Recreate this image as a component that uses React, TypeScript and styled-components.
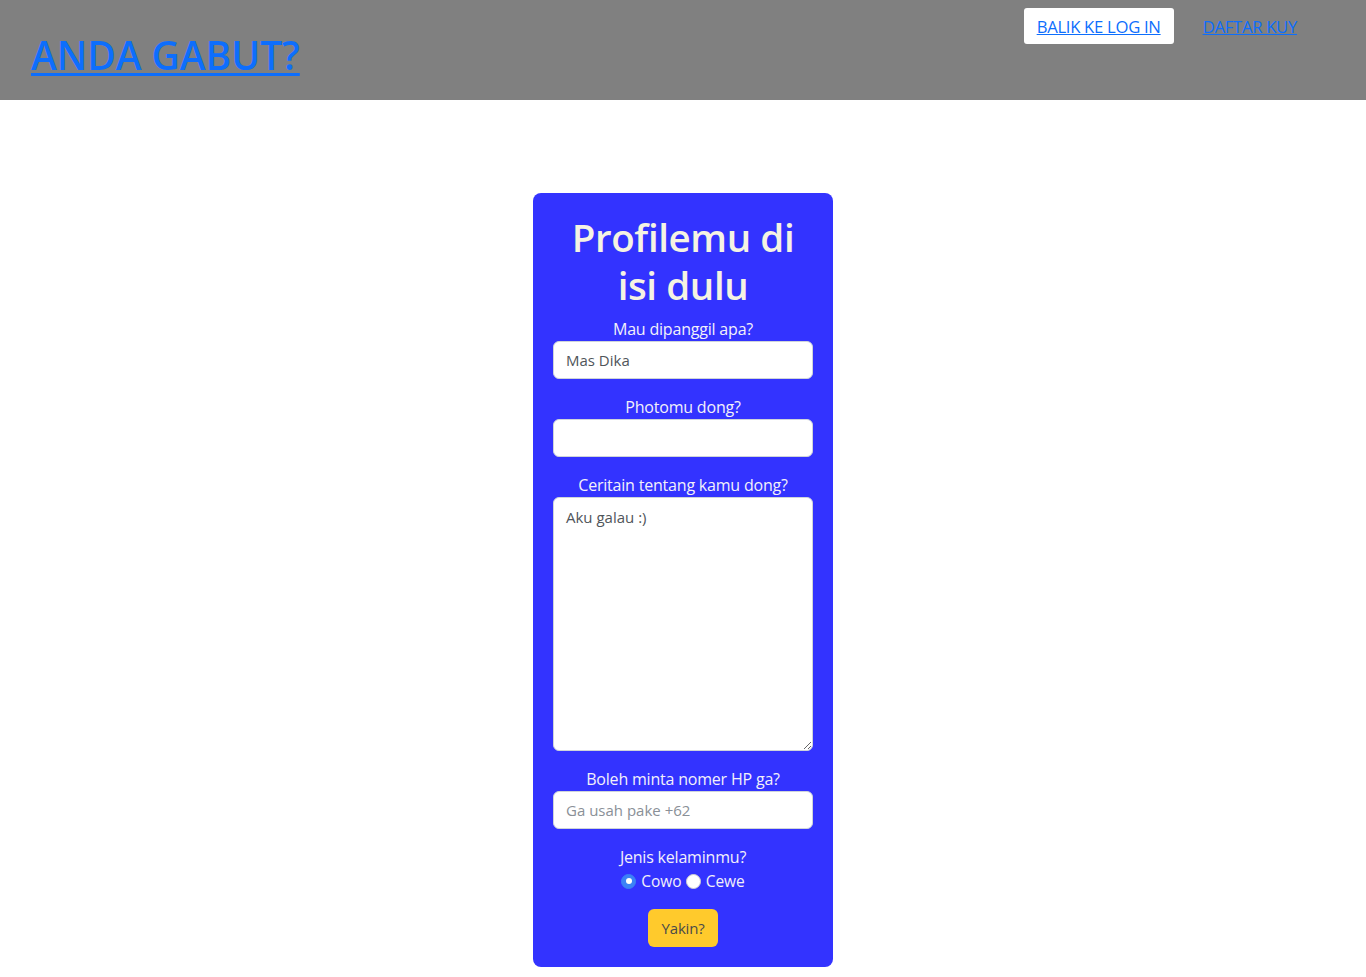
import React from "react";
import styled, { createGlobalStyle } from "styled-components";

const Global = createGlobalStyle`
  html, body { margin: 0; padding: 0; background: #fff; }
  body { font-family: "Open Sans", "Noto Sans", sans-serif; color: #212529; }
  * { box-sizing: border-box; }
`;

const Header = styled.header`
  height: 100px;
  background: #808080;
  display: flex;
  justify-content: space-between;
  align-items: flex-start;
  padding: 0 56px 0 31px;
`;

const Brand = styled.a`
  margin-top: 31px;
  font-size: 39px;
  font-weight: 600;
  line-height: 48px;
  color: #0d6efd;
  text-decoration: underline;
  text-underline-offset: 3px;
  letter-spacing: -0.05px;
`;

const Nav = styled.nav`
  display: flex;
  gap: 16px;
  margin-top: 8px;
`;

const NavLink = styled.a<{ $boxed?: boolean }>`
  display: block;
  height: 36px;
  line-height: 38px;
  padding: 0 13px;
  font-size: 16.7px;
  color: #0d6efd;
  text-decoration: underline;
  background: ${(p) => (p.$boxed ? "#fff" : "transparent")};
  border-radius: 3px;
  letter-spacing: -0.3px;
`;

const Main = styled.main`
  display: flex;
  justify-content: center;
  padding-top: 93px;
`;

const Card = styled.form`
  width: 300px;
  background: #3333ff;
  border-radius: 8px;
  padding: 20px;
  display: flex;
  flex-direction: column;
  align-items: stretch;
  text-align: center;
`;

const Title = styled.h1`
  margin: 0 0 8px;
  font-size: 38.5px;
  line-height: 48px;
  font-weight: 600;
  color: #f5f3e3;
  letter-spacing: -0.4px;
`;

const Group = styled.div`
  display: flex;
  flex-direction: column;
  margin-bottom: 16px;
`;

const Label = styled.label`
  font-size: 16px;
  line-height: 24px;
  font-weight: 500;
  color: #f2f0fa;
  letter-spacing: -0.2px;
`;

const Input = styled.input`
  height: 38px;
  width: 100%;
  border: 1px solid #ced4da;
  border-radius: 6px;
  padding: 6px 12px;
  font-family: inherit;
  font-size: 15px;
  color: #50555a;
  background: #fff;
  outline: none;
  &::placeholder { color: #8a9097; }
`;

const TextArea = styled.textarea`
  height: 254px;
  width: 100%;
  border: 1px solid #ced4da;
  border-radius: 6px;
  padding: 8px 12px;
  font-family: inherit;
  font-size: 15px;
  line-height: 22px;
  color: #50555a;
  background: #fff;
  outline: none;
  resize: vertical;
  display: block;
`;

const RadioRow = styled.div`
  display: flex;
  justify-content: center;
  align-items: center;
  gap: 4px;
  height: 24px;
  font-size: 15.5px;
  color: #f2f0fa;
`;

const RadioLabel = styled.label`
  display: flex;
  align-items: center;
  gap: 5px;
`;

const Radio = styled.input`
  appearance: none;
  margin: 0;
  width: 15px;
  height: 15px;
  border-radius: 50%;
  background: #fff;
  border: 1px solid #d0d0d0;
  display: grid;
  place-items: center;
  &:checked {
    background: #3b82f6;
    border-color: #3b82f6;
  }
  &:checked::after {
    content: "";
    width: 6px;
    height: 6px;
    border-radius: 50%;
    background: #fff;
  }
`;

const Submit = styled.button`
  align-self: center;
  width: 70px;
  height: 38px;
  border: none;
  border-radius: 6px;
  background: #ffca2c;
  color: #4a4a4a;
  font-family: inherit;
  font-size: 15px;
  letter-spacing: -0.2px;
`;

export default function App() {
  return (
    <>
      <Global />
      <Header>
        <Brand href="#">ANDA GABUT?</Brand>
        <Nav>
          <NavLink href="#" $boxed>BALIK KE LOG IN</NavLink>
          <NavLink href="#">DAFTAR KUY</NavLink>
        </Nav>
      </Header>
      <Main>
        <Card onSubmit={(e) => e.preventDefault()}>
          <Title>Profilemu di isi dulu</Title>
          <Group>
            <Label>Mau dipanggil apa?</Label>
            <Input defaultValue="Mas Dika" />
          </Group>
          <Group>
            <Label>Photomu dong?</Label>
            <Input />
          </Group>
          <Group>
            <Label>Ceritain tentang kamu dong?</Label>
            <TextArea defaultValue="Aku galau :)" />
          </Group>
          <Group>
            <Label>Boleh minta nomer HP ga?</Label>
            <Input placeholder="Ga usah pake +62" />
          </Group>
          <Group>
            <Label>Jenis kelaminmu?</Label>
            <RadioRow>
              <RadioLabel>
                <Radio type="radio" name="jk" defaultChecked />
                Cowo
              </RadioLabel>
              <RadioLabel>
                <Radio type="radio" name="jk" />
                Cewe
              </RadioLabel>
            </RadioRow>
          </Group>
          <Submit type="submit">Yakin?</Submit>
        </Card>
      </Main>
    </>
  );
}
